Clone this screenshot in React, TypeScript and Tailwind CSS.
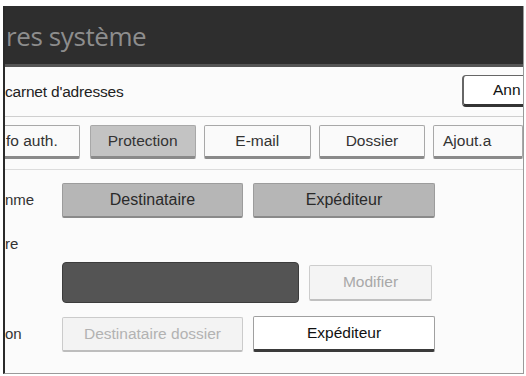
function Tab({ label, active, className }: { label: string; active?: boolean; className?: string }) {
  return (
    <div
      className={
        "h-[34px] flex items-center justify-center border border-[#a8a8a8] border-b-[3px] border-b-[#8a8a8a] rounded-[2px] text-[15.5px] text-[#333] " +
        (active ? "bg-[#c3c3c3]" : "bg-[#fafafa]") +
        " " +
        (className ?? "")
      }
    >
      {label}
    </div>
  );
}

export default function App() {
  return (
    <div className="w-[526px] h-[376px] bg-white pt-[6px] pl-[3px] pr-[2px] pb-[2px] font-['Liberation_Sans',Arial,sans-serif]">
      <div className="h-full flex flex-col overflow-hidden border-l-2 border-[#2a2a2a] border-r border-b border-r-[#9a9a9a] border-b-[#9a9a9a] bg-[#fbfbfb]">
        {/* title bar */}
        <div className="h-[61px] shrink-0 flex items-center bg-[#2e2e2e] border-b-[3px] border-[#555] pl-[1px] pt-[3px]">
          <span className="text-[26px] tracking-[-0.4px] text-[#8d8d8d] font-['Open_Sans',sans-serif]">res système</span>
        </div>

        {/* address book row */}
        <div className="h-[50px] shrink-0 flex items-center justify-between border-b border-[#cfcfcf]">
          <span className="text-[15.5px] text-[#222] tracking-[-0.2px]">carnet d'adresses</span>
          <div className="w-[90px] h-[32px] shrink-0 -mr-[29px] mt-[-2px] flex items-center pl-[29px] bg-white border border-[#666] border-b-[3px] border-l-2 border-b-[#333] rounded-[4px] text-[15.5px] text-[#111]">
            Ann
          </div>
        </div>

        {/* tabs */}
        <div className="h-[53px] shrink-0 flex items-start gap-[8px] pt-[8px] border-b border-[#dcdcdc]">
          <Tab label="fo auth." className="w-[80px] justify-start pl-[1px] rounded-l-none border-l-0" />
          <Tab label="Protection" active className="w-[114px] ml-[2px]" />
          <Tab label="E-mail" className="w-[115px]" />
          <Tab label="Dossier" className="w-[114px]" />
          <Tab label="Ajout.a" className="w-[90px] shrink-0 justify-start pl-[9px]" />
        </div>

        {/* settings */}
        <div className="flex flex-col pt-[13px]">
          <div className="flex items-center h-[35px]">
            <span className="w-[57px] shrink-0 text-[15px] text-[#333]">nme</span>
            <div className="w-[181px] h-[35px] flex items-center justify-center bg-[#b6b6b6] border border-[#9c9c9c] border-b-2 border-b-[#8a8a8a] rounded-[2px] text-[16px] text-[#2a2a2a]">
              Destinataire
            </div>
            <div className="w-[182px] h-[35px] ml-[10px] flex items-center justify-center bg-[#b6b6b6] border border-[#9c9c9c] border-b-2 border-b-[#8a8a8a] rounded-[2px] text-[16px] text-[#2a2a2a]">
              Expéditeur
            </div>
          </div>

          <div className="h-[18px] mt-[17px] flex items-center">
            <span className="text-[15px] text-[#333]">re</span>
          </div>

          <div className="flex items-center h-[41px] mt-[9px]">
            <div className="w-[57px] shrink-0" />
            <div className="w-[237px] h-[41px] bg-[#545454] rounded-[4px] border border-[#3c3c3c]" />
            <div className="w-[123px] h-[36px] ml-[10px] flex items-center justify-center bg-[#f4f4f4] border border-[#cdcdcd] border-b-2 border-b-[#c0c0c0] rounded-[2px] text-[15.5px] text-[#a8a8a8]">
              Modifier
            </div>
          </div>

          <div className="flex items-center h-[36px] mt-[13px]">
            <span className="w-[57px] shrink-0 text-[15px] text-[#333]">on</span>
            <div className="w-[181px] h-[35px] flex items-center justify-center bg-[#f3f3f3] border border-[#cbcbcb] border-b-2 border-b-[#bdbdbd] rounded-[2px] text-[15.5px] text-[#b2b2b2]">
              Destinataire dossier
            </div>
            <div className="w-[182px] h-[36px] ml-[10px] flex items-center justify-center bg-white border border-[#a0a0a0] border-b-[3px] border-b-[#3a3a3a] rounded-[2px] text-[15.5px] text-[#111]">
              Expéditeur
            </div>
          </div>
        </div>
      </div>
    </div>
  );
}
